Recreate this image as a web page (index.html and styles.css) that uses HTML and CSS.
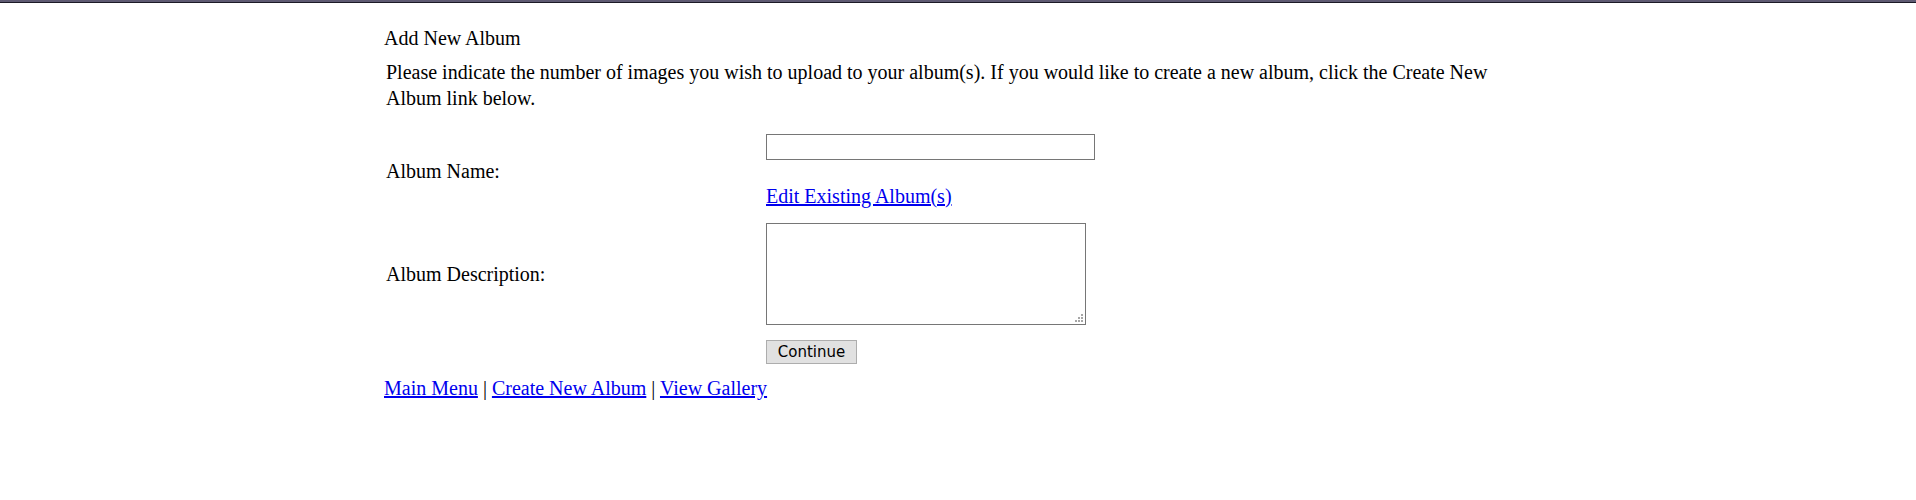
FILE: index.html
```html
<!DOCTYPE html>
<html>
<head>
<meta charset="utf-8">
<title>Add New Album</title>
<link rel="stylesheet" href="styles.css">
</head>
<body>
<div class="topbar"></div>
<div class="wrap">
  <h1 class="title">Add New Album</h1>
  <p class="intro">Please indicate the number of images you wish to upload to your album(s). If you would like to create a new album, click the Create New Album link below.</p>
  <form class="form">
    <label class="label" for="name">Album Name:</label>
    <div class="field">
      <input class="text" id="name" type="text">
      <a class="link edit" href="#">Edit Existing Album(s)</a>
    </div>
    <label class="label" for="desc">Album Description:</label>
    <div class="field">
      <div class="area-wrap">
        <textarea class="area" id="desc"></textarea>
        <svg class="grip" width="8" height="8" viewBox="0 0 8 8" aria-hidden="true">
          <rect x="6" y="0" width="2" height="2" fill="#a6a6a6"/>
          <rect x="3" y="3" width="2" height="2" fill="#a6a6a6"/>
          <rect x="6" y="3" width="2" height="2" fill="#a6a6a6"/>
          <rect x="0" y="6" width="2" height="2" fill="#a6a6a6"/>
          <rect x="3" y="6" width="2" height="2" fill="#a6a6a6"/>
          <rect x="6" y="6" width="2" height="2" fill="#a6a6a6"/>
        </svg>
      </div>
    </div>
    <div></div>
    <div class="field">
      <button class="btn" type="button">Continue</button>
    </div>
  </form>
  <div class="nav"><a class="link" href="#">Main Menu</a> | <a class="link" href="#">Create New Album</a> | <a class="link" href="#">View Gallery</a></div>
</div>
</body>
</html>
```
FILE: styles.css
```css
html, body {
  margin: 0;
  padding: 0;
  background: #ffffff;
}
body {
  font-family: "Liberation Serif", "Times New Roman", serif;
  font-size: 20px;
  color: #000000;
}
.topbar {
  height: 2px;
  background: #5e5a72;
  border-bottom: 1px solid #1b1a26;
}
.wrap {
  width: 1148px;
  margin: 0 auto;
  padding-top: 24px;
}
.title {
  margin: 0;
  font-size: 20px;
  font-weight: normal;
  line-height: 23px;
}
.intro {
  margin: 9px 0 0 2px;
  line-height: 26px;
}
.form {
  display: grid;
  grid-template-columns: 380px auto;
  row-gap: 15px;
  align-items: center;
  margin-top: 23px;
  padding-left: 2px;
}
.label {
  line-height: 23px;
}
.field {
  display: flex;
  flex-direction: column;
  align-items: flex-start;
}
.text {
  box-sizing: border-box;
  width: 329px;
  height: 26px;
  margin: 0;
  border: 1px solid #767676;
  padding: 1px 3px;
  font-size: 16px;
}
.link {
  color: #0000ee;
  text-decoration: underline;
}
.edit {
  display: block;
  margin-top: 25px;
  line-height: 23px;
}
.area-wrap {
  position: relative;
  width: 320px;
  height: 102px;
}
.area {
  box-sizing: border-box;
  width: 320px;
  height: 102px;
  margin: 0;
  border: 1px solid #767676;
  padding: 2px;
  display: block;
  resize: none;
}
.grip {
  position: absolute;
  right: 3px;
  bottom: 3px;
  display: block;
}
.btn {
  box-sizing: border-box;
  width: 91px;
  height: 24px;
  margin: 0;
  padding: 0;
  background: #e1e1e1;
  border: 1px solid #adadad;
  font-family: "DejaVu Sans", "Liberation Sans", sans-serif;
  font-size: 15px;
  color: #000000;
}
.nav {
  margin-top: 13px;
  line-height: 23px;
}
```
